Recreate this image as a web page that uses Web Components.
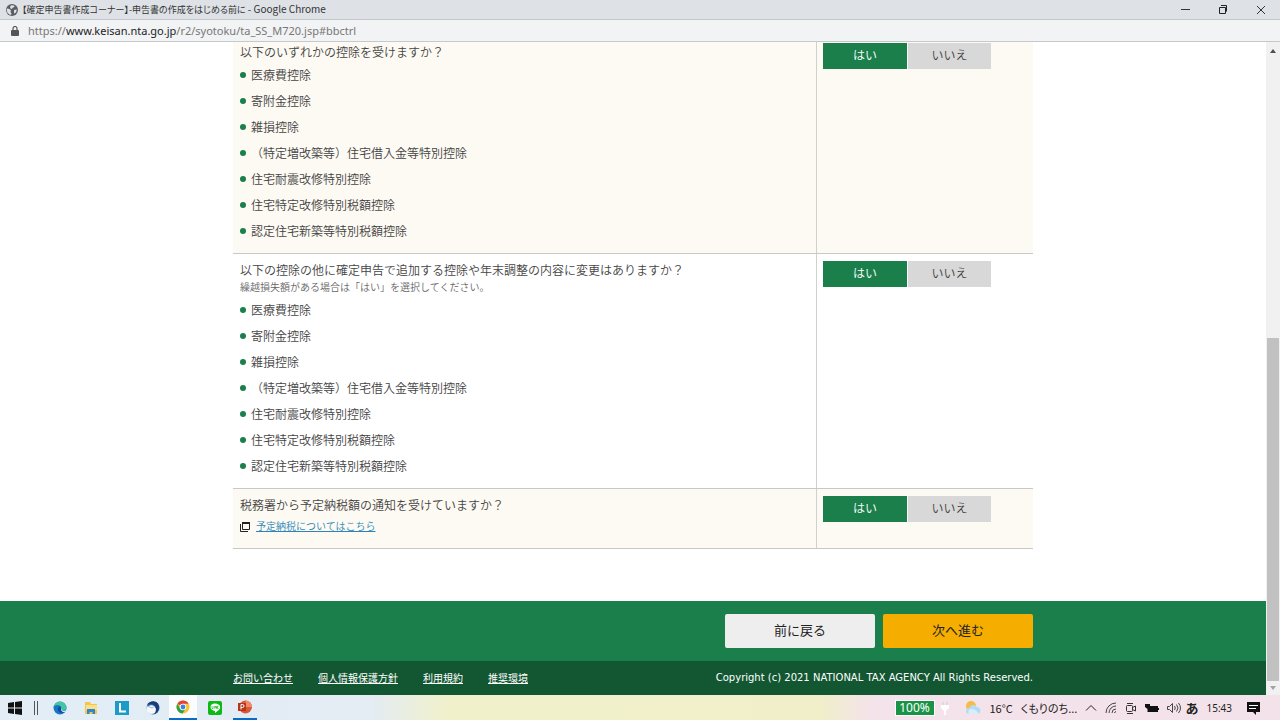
<!DOCTYPE html>
<html lang="ja">
<head>
<meta charset="utf-8">
<title>申告書の作成をはじめる前に</title>
<style>
html,body{margin:0;height:100%}
body{font-family:"Noto Sans CJK JP","Noto Sans",sans-serif;font-size:12px;color:#444;background:#fff}
</style>
</head>
<body>
<browser-window></browser-window>
<script>
function define(name, html, setup) {
  const template = document.createElement('template');
  template.innerHTML = html;
  customElements.define(name, class extends HTMLElement {
    constructor() {
      super();
      this.attachShadow({mode: 'open'}).append(template.content.cloneNode(true));
    }
    connectedCallback() { if (setup) setup(this, this.shadowRoot); }
  });
}

define('window-title', `
<style>
:host{display:flex;align-items:center;height:19px;padding-left:6px;background:#dee1e6;border-bottom:1px solid #c3c6ca;color:#333}
svg{display:block;flex:none}
.name{flex:1;margin-left:4px;font-size:9px;line-height:18px;font-feature-settings:"palt";white-space:pre}
::slotted(span){font-size:10px}
button{border:0;background:none;padding:0;width:38px;height:19px;display:grid;place-items:center}
.controls{display:flex}
</style>
<svg width="12" height="12" viewBox="0 0 12 12"><circle cx="6" cy="6" r="6" fill="#5a5d61"/><path d="M1 4.500 3.500 5l1.500 1.500-.5 1.500 1 1.500-.5 1.500A5 5 0 0 1 1 4.500zM5 1.200l3 .3.5 1.500-2 .8-.5 1.200-1.500-.5L4 3zM8 6l2.800-.5a5 5 0 0 1-2.300 4.300L8 8.500z" fill="#dee1e6"/></svg>
<span class="name"><slot></slot></span>
<div class="controls">
<button aria-label="最小化"><svg width="10" height="10"><path d="M1 4.500h9" stroke="#333"/></svg></button>
<button aria-label="元に戻す"><svg width="10" height="10" fill="none" stroke="#222"><path d="M1.500 2.500h6v6h-6zM3 .5h5.500v6"/></svg></button>
<button aria-label="閉じる"><svg width="10" height="10"><path d="M1 1l8 8M9 1l-8 8" stroke="#333"/></svg></button>
</div>`);

define('address-bar', `
<style>
:host{display:flex;align-items:center;height:21px;padding-left:11px;background:#f1f3f4;border-bottom:1px solid #c6c9cc;font:11px "Noto Sans",sans-serif;color:#777}
svg{display:block}
.url{margin-left:9px;line-height:20px;padding-top:1px;white-space:nowrap}
::slotted(b){font-weight:400;color:#222}
</style>
<svg width="8" height="10" viewBox="0 0 8 10"><path d="M2 4V2.500a2 2 0 0 1 4 0V4" fill="none" stroke="#555" stroke-width="1.200"/><rect y="4" width="8" height="6" rx="1" fill="#555"/></svg>
<span class="url"><slot></slot></span>`);

define('page-scrollbar', `
<style>
:host{display:grid;grid-template-rows:16px 45fr 55fr 14px;width:14px;background:#f1f1f1}
svg{display:block;place-self:center}
.thumb{background:#c1c1c1;margin-left:1px;margin-right:1px}
</style>
<svg width="8" height="5"><path d="M1 5 4 1l3 4z" fill="#505050"/></svg>
<span></span><div class="thumb"></div>
<svg width="8" height="5"><path d="M1 0 4 4l3-4z" fill="#a3a3a3"/></svg>`);

define('yes-no', `
<style>
:host{display:flex;gap:1px}
button{width:83px;height:26px;padding:0 0 2px;border:0;background:#d8d8d8;color:#444;font:inherit;line-height:24px}
button[aria-pressed=true]{width:84px;background:#1a7f4b;color:#fff}
</style>
<button aria-pressed="true">はい</button><button aria-pressed="false">いいえ</button>`);

define('question-row', `
<style>
:host{display:grid;grid-template-columns:minmax(0,583fr) minmax(0,217fr);border-bottom:1px solid #c8c8c6;background:#fff}
:host([shaded]){background:#fdfaf3}
.question{padding:7px 7px 9px}
.answer{border-left:1px solid #d0d0ce;padding:7px 6px}
h2{margin:0;font-size:12px;font-weight:350;line-height:18px}
</style>
<div class="question"><h2><slot name="title"></slot></h2><slot></slot></div>
<div class="answer"><yes-no></yes-no></div>`);

define('question-note', `
<style>:host{display:block;padding-bottom:2px;font-size:10px;line-height:15px;color:#666}</style><slot></slot>`);

define('deduction-list', `
<style>
:host{display:block}
ul{margin:1px 0 0;padding:0;list-style:none}
li{display:flex;align-items:center;gap:5px;line-height:26px}
li::before{content:"";width:6px;height:6px;border-radius:50%;background:#1a7f4b}
</style><ul></ul>`, (host, root) => {
  const items = ['医療費控除','寄附金控除','雑損控除','（特定増改築等）住宅借入金等特別控除','住宅耐震改修特別控除','住宅特定改修特別税額控除','認定住宅新築等特別税額控除'];
  root.querySelector('ul').replaceChildren(...items.map(text => {
    const li = document.createElement('li');
    li.textContent = text;
    return li;
  }));
});

define('help-link', `
<style>
:host{display:flex;align-items:center;gap:6px;padding:2px 0 3px;font-size:10px;line-height:20px}
a{color:#2b86b8;text-decoration:underline}
svg{display:block;margin-top:2px}
</style>
<svg width="10" height="10" fill="none" stroke="#222"><path d="M2.500 1.500h7v6h-7z"/><path d="M2 1h8" stroke-width="2"/><path d="M.5 2v7.500H8"/></svg>
<a href="#yotei"><slot></slot></a>`);

define('action-bar', `
<style>
:host{display:block;background:#1a7f4b;padding:13px 0}
.inner{display:flex;justify-content:flex-end;gap:8px;max-width:800px;margin:auto}
button{width:150px;height:34px;padding:0 0 2px;border:0;border-radius:2px;background:#eee;color:#222;font:inherit;font-size:13px;line-height:32px}
button.next{background:#f5ad00}
</style>
<div class="inner"><button>前に戻る</button><button class="next">次へ進む</button></div>`);

define('site-footer', `
<style>
:host{display:block;background:#125732;color:#fff}
.inner{display:flex;align-items:center;max-width:800px;height:32px;padding-bottom:2px;margin:auto;font-size:10px}
nav{display:flex;gap:25px;flex:1}
a{color:#fff;text-decoration:underline}
small{font:10px "DejaVu Sans",sans-serif}
</style>
<div class="inner"><nav><a href="#contact">お問い合わせ</a><a href="#privacy">個人情報保護方針</a><a href="#terms">利用規約</a><a href="#env">推奨環境</a></nav>
<small>Copyright (c) 2021 NATIONAL TAX AGENCY All Rights Reserved.</small></div>`);

define('task-bar', `
<style>
:host{display:flex;align-items:center;height:25px;background:linear-gradient(90deg,#e2edf5 0,#e4ecf4 29%,#f0f0cb 35%,#f0efc9 64%,#f4e3ea 68%,#f3e2e9 100%);color:#222;font-size:11px;overflow:hidden}
svg{display:block}
button{border:0;padding:0;background:none;display:grid;place-items:center;height:25px;width:31px;box-sizing:border-box}
.start{width:29px}
.bars{width:4px;height:14px;border:solid #555;border-width:0 1px;box-sizing:border-box;margin:0 6px 0 5px}
.active{background:#fafcfd}
.active,.open{border-bottom:2px solid #0a6cc4;width:28px;margin:0 2px 0 1px}
.open{width:24px;margin:0 4px 0 3px}
.tray{display:flex;align-items:center;margin-left:auto}
.power{font:12px/14px "Noto Sans",sans-serif;background:#199447;color:#fff;width:38px;text-align:center;outline:1px solid #fff}
.plug{margin:0 15px 0 6px}
.weather{display:flex;gap:8px;white-space:nowrap;margin:0 8px;font-feature-settings:"palt"}
.icons{display:flex;align-items:center;gap:8px}
.ime{font-size:13px;font-weight:700;margin:0 8px 0 4px}
time{margin-right:15px;font-family:"Noto Sans",sans-serif;font-size:10px}
.msg{margin-right:20px}
</style>
<button class="start" aria-label="スタート"><svg width="14" height="14"><path d="M0 2 6 1v5.500H0zM7 1l7-1v6.500H7zM0 7.500h6V13l-6-1zM7 7.500h7V14l-7-1z" fill="#111"/></svg></button>
<span class="bars"></span>
<button aria-label="Edge"><svg width="14" height="14"><circle cx="7" cy="7" r="6.500" fill="#1577c7"/><path d="M.5 6C2 0 11-2 13.500 6c0 4-5 4-5 1.500C8 3 2 3 .5 6z" fill="#43c6a2"/><path d="M5 7c-1 4 3 6 7 4-3-1-4-2-4-4 0-2-2-2-3 0z" fill="#0f4e9b"/><path d="M8.500 7c0 3 3 3.500 5 2l-2 2c-3 0-4-2-3-4z" fill="#e8f1f7"/></svg></button>
<button aria-label="エクスプローラー"><svg width="14" height="14"><path d="M1 1h5l1 2h6v10H1z" fill="#f6c549"/><path d="M2 4h11v5H2z" fill="#fbe08b"/><path d="M3 13V8h8v5H8.500v-2h-3v2z" fill="#2c89cf"/></svg></button>
<button aria-label="L"><svg width="14" height="14"><path d="M0 0h14v14H0z" fill="#1a9bc8"/><path d="M5 2v8.500h6" fill="none" stroke="#fff" stroke-width="2"/></svg></button>
<button aria-label="Thunderbird"><svg width="14" height="14"><circle cx="7" cy="7" r="6.500" fill="#2c62a9"/><path d="M.5 5.500 4 4.500c3-1 6 1 6 4s-2 4.500-4.500 4.500S1 11 .5 9z" fill="#f5f7fa"/><path d="M1 5 6 7l3-2" fill="none" stroke="#9fb4cf"/><path d="M1 4c2-4 8-5 11-1.500 2 3 1 8-3 10.500 2-4 1-8-2-9.500-2-.8-4-.5-6 .5z" fill="#183e78"/></svg></button>
<button class="active" aria-label="Chrome"><svg width="14" height="14"><circle cx="7" cy="7" r="6.500" fill="#f8c52c"/><path d="M7 7 1.400 3.700A6.500 6.500 0 0 1 12.600 3.700H7z" fill="#df4436"/><path d="M7 7 4 8.500 1.400 3.700A6.500 6.500 0 0 0 6.500 13.500L9.500 9z" fill="#2ba24c"/><circle cx="7" cy="7" r="3.200" fill="#fff"/><circle cx="7" cy="7" r="2.400" fill="#3f7fe8"/></svg></button>
<button aria-label="LINE"><svg width="14" height="14"><rect width="14" height="14" rx="2" fill="#0db915"/><path d="M7 2.500c6 0 6.500 5.500 2.500 7.500L7 12v-2c-6-.5-6-7.500 0-7.500z" fill="#fff"/><path d="M4 5v2.500h1.200M6 5v2.500M7 7.500V5l1.500 2.500V5M10.500 5h-1v2.500h1" fill="none" stroke="#0db915" stroke-width=".7"/></svg></button>
<button class="open" aria-label="PowerPoint"><svg width="14" height="14"><circle cx="7.500" cy="7" r="6.500" fill="#d95835"/><path d="M7.500.5A6.500 6.500 0 0 1 14 7H7.500z" fill="#f08b68"/><path d="M0 3h8v8H0z" fill="#b9351a"/><path d="M3 9.500v-5h1.500a1.400 1.400 0 0 1 0 3H3" fill="none" stroke="#fff"/></svg></button>
<div class="tray">
<span class="power">100%</span>
<svg class="plug" width="10" height="14"><path d="M3 1v4M7 1v4" stroke="#ccc"/><path d="M1 4h8v3L6 10v4H4v-4L1 7z" fill="#fff"/></svg>
<svg width="17" height="14"><circle cx="6" cy="5" r="5" fill="#f6bd45"/><path d="M4 13a3 3 0 0 1 0-6 4.500 4.500 0 0 1 8-1 3.600 3.600 0 0 1 1 7z" fill="#b5daf3"/><path d="M4 13a3 3 0 0 1 2-5q5 0 8 5z" fill="#d9edf9"/></svg>
<span class="weather"><span>16°C</span><span>くもりのち...</span></span>
<div class="icons">
<svg width="12" height="12" fill="none" stroke="#222"><path d="M1 8.500l5-5 5 5"/></svg>
<svg width="12" height="12" fill="none" stroke="#444"><path d="M1 11A10 10 0 0 1 11 1M4 11a7 7 0 0 1 7-7M7 11a4 4 0 0 1 4-4M9.500 11A2 2 0 0 1 11 9.500"/></svg>
<svg width="12" height="12" fill="none" stroke="#333"><rect x="1.500" y="3.500" width="6" height="6" rx="1"/><path d="M7.500 5.500l3-1.500v5l-3-1.500M2 1.500h6M2 11.500h6"/></svg>
<svg width="14" height="12"><path d="M3 4h10v6H3z" fill="#111"/><path d="M13 6h1v2h-1zM0 2h5v3.500L3.500 7v3h-1V7L0 5z" fill="#111"/></svg>
<svg width="14" height="12" fill="none" stroke="#444"><path d="M.5 4.500h2l3-3v9l-3-3h-2zM7.500 4q1.500 2 0 4M9.500 2.500q3 3.500 0 7M11.500 1q4 5 0 10"/></svg>
</div>
<span class="ime">あ</span>
<time>15:43</time>
<svg class="msg" width="13" height="14"><path d="M0 1h13v10H9v3l-3-3H0z" fill="#111"/><path d="M2 4.500h9M2 7.500h7" stroke="#fff"/></svg>
</div>`);

define('browser-window', `
<style>
:host{display:grid;grid-template-rows:auto auto minmax(0,1fr) auto;height:100vh}
.viewport{display:flex;min-height:0;overflow:hidden;background:#fff}
.page{flex:1;display:flex;flex-direction:column;justify-content:flex-end;min-width:0;overflow:hidden}
main{width:100%;max-width:800px;margin:0 auto 52px;font-weight:350}
</style>
<window-title>【確定申告書作成コーナー】-申告書の作成をはじめる前に<span> - Google Chrome</span></window-title>
<address-bar>https://<b>www.keisan.nta.go.jp</b>/r2/syotoku/ta_SS_M720.jsp#bbctrl</address-bar>
<div class="viewport">
<div class="page">
<main>
<question-row shaded><span slot="title">以下のいずれかの控除を受けますか？</span><deduction-list></deduction-list></question-row>
<question-row><span slot="title">以下の控除の他に確定申告で追加する控除や年末調整の内容に変更はありますか？</span><question-note>繰越損失額がある場合は「はい」を選択してください。</question-note><deduction-list></deduction-list></question-row>
<question-row shaded><span slot="title">税務署から予定納税額の通知を受けていますか？</span><help-link>予定納税についてはこちら</help-link></question-row>
</main>
<action-bar></action-bar>
<site-footer></site-footer>
</div>
<page-scrollbar></page-scrollbar>
</div>
<task-bar></task-bar>`);
</script>
</body>
</html>
